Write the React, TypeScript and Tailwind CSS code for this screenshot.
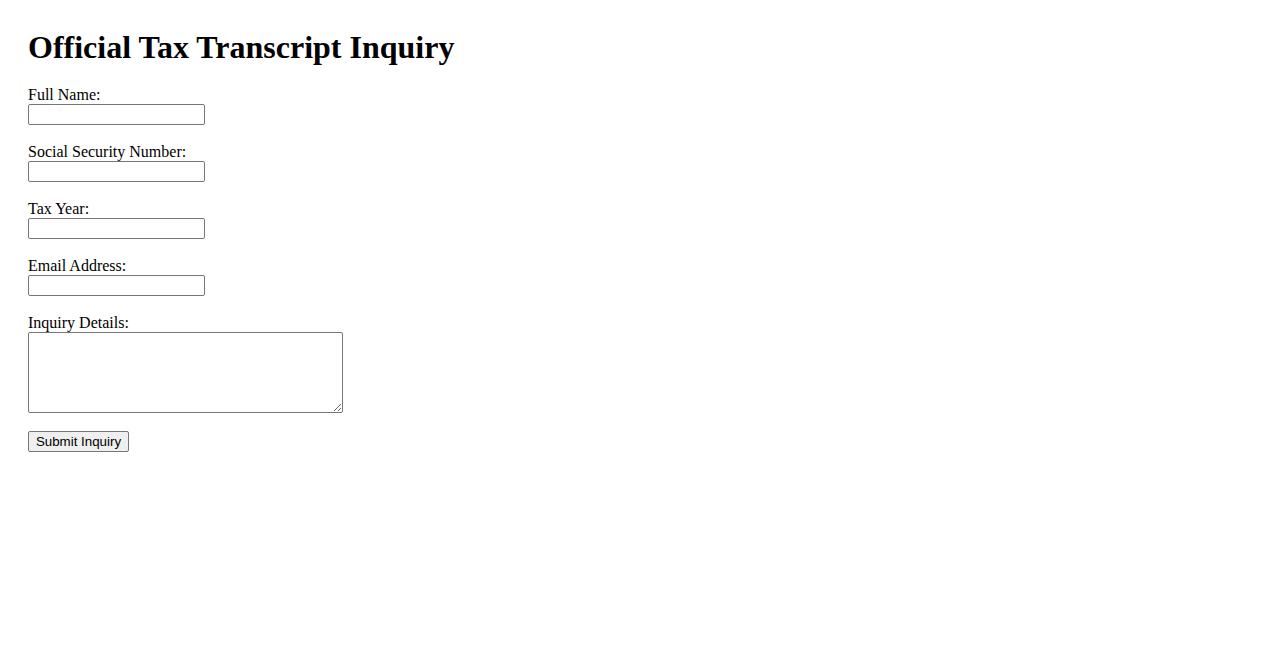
export default function App() {
  const fields = ["Full Name:", "Social Security Number:", "Tax Year:", "Email Address:"];
  return (
    <div className="min-h-[650px] bg-white pl-[28px] pt-[29px] text-black font-['Liberation_Serif',serif] text-[16px]">
      <h1 className="text-[32px] font-bold leading-[37px] mb-[20px]">Official Tax Transcript Inquiry</h1>
      <form onSubmit={(e) => e.preventDefault()} className="flex flex-col items-start">
        {fields.map((f) => (
          <div key={f} className="flex flex-col items-start mb-[18px]">
            <label className="leading-[18px] h-[18px]">{f}</label>
            <input
              type="text"
              className="w-[177px] h-[21px] border border-[#767676] rounded-[2px] bg-white px-[2px] text-[13px]"
            />
          </div>
        ))}
        <div className="flex flex-col items-start mb-[18px]">
          <label className="leading-[18px] h-[18px]">Inquiry Details:</label>
          <textarea className="w-[315px] h-[81px] border border-[#767676] rounded-[2px] bg-white resize" />
        </div>
        <button
          type="submit"
          className="h-[21px] w-[101px] border border-[#767676] rounded-[2px] bg-[#efefef] text-[13.33px] leading-[15px] font-['Liberation_Sans',Arial,sans-serif] text-black"
        >
          Submit Inquiry
        </button>
      </form>
    </div>
  );
}
